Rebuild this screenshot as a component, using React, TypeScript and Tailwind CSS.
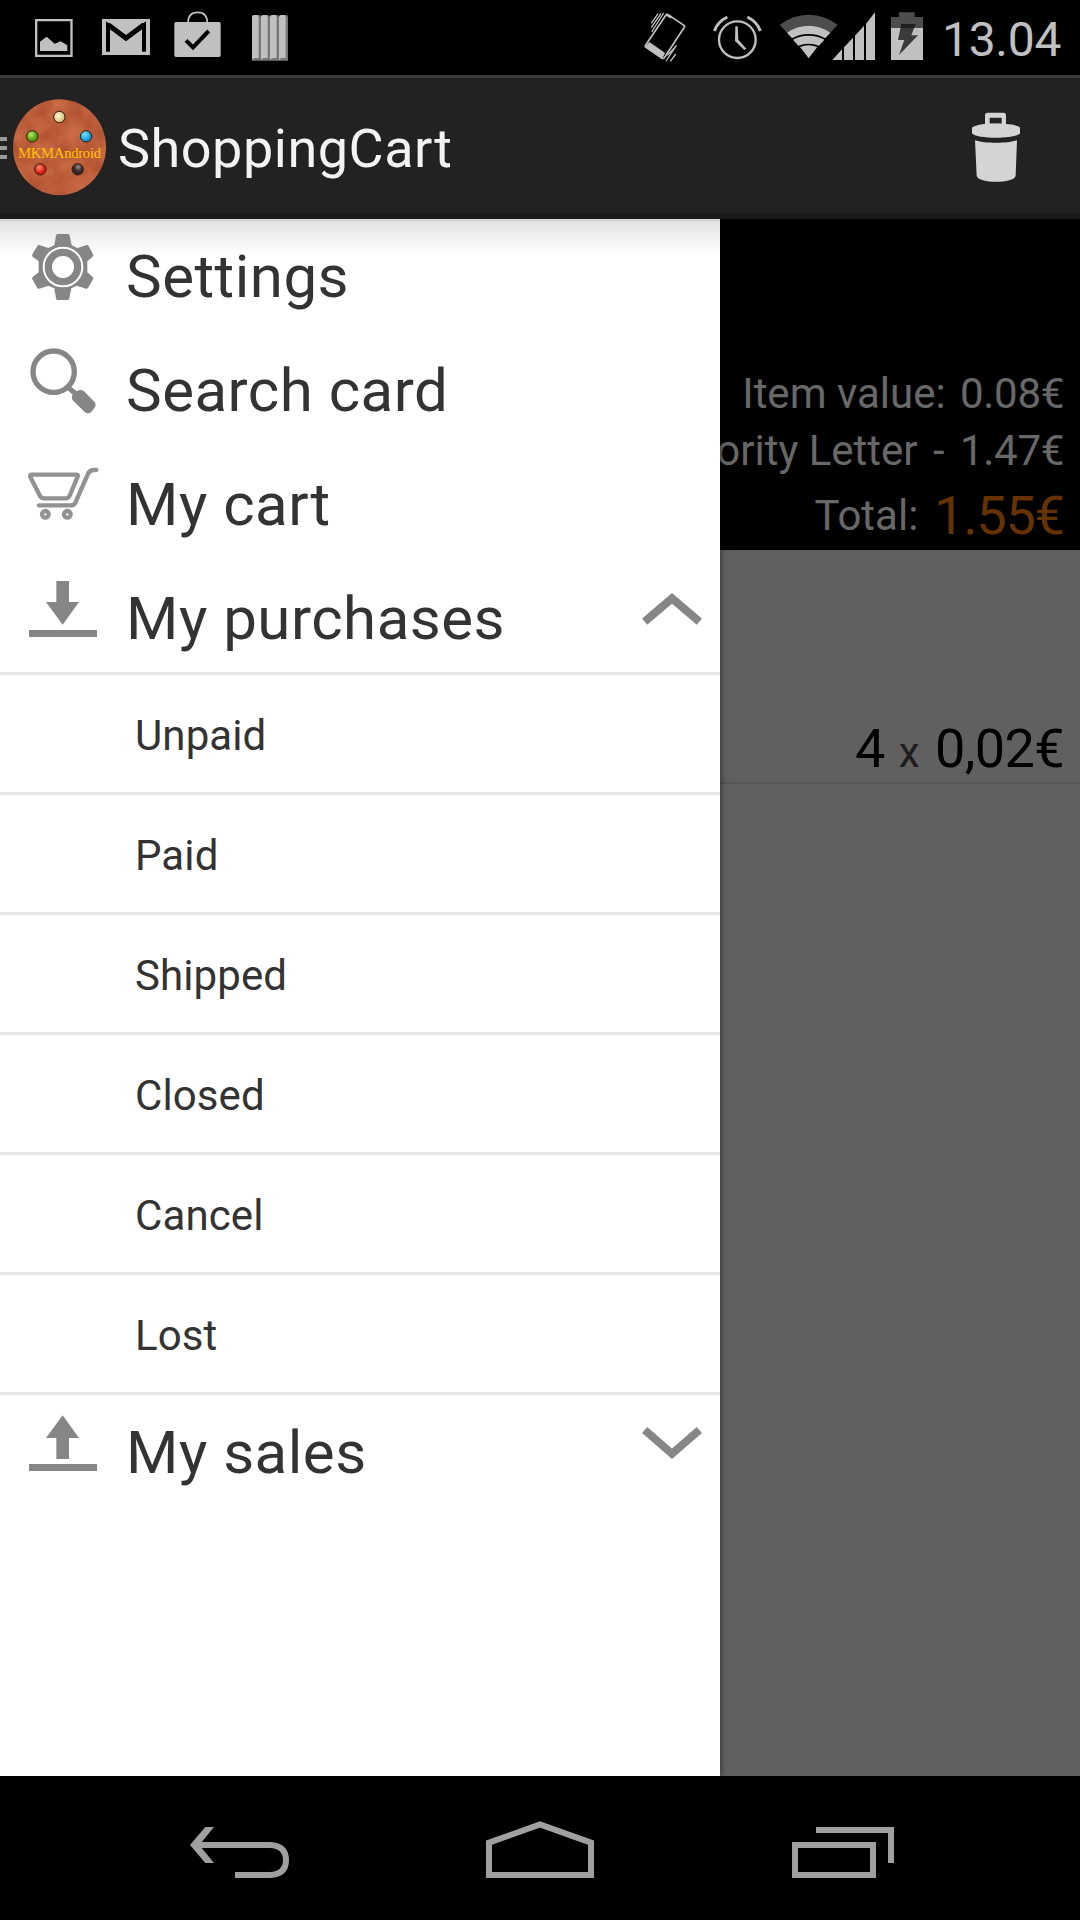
import React from "react";

const gray = "#868686";

function StatusBar() {
  return (
    <div className="flex h-[75px] items-start bg-black">
      <svg className="ml-[33px] mt-3 h-[51px] w-[42px]" viewBox="99 36 126 153" fill="#c0c0c0">
        <path fillRule="evenodd" d="M105 57h113v114H105zM112 64v100h99V64z" />
        <path d="M120 153v-28l20-15 24 21 18-7 20 12v17z" />
      </svg>
      <svg className="ml-[25px] mt-3 h-[51px] w-[54px]" viewBox="300 36 162 153">
        <path d="M306 57h144v108H306z" fill="#c0c0c0" />
        <path d="M324 155V76l54 40 54-40v79" fill="none" stroke="#000" strokeWidth="12" />
        <path d="M318 69h12l48 36 48-36h11v12h-12v2l-47 35-47-35v-2h-13z" fill="#000" />
      </svg>
      <svg className="ml-[17px] mt-[9px] h-[54px] w-[51px]" viewBox="513 27 153 162">
        <rect x="523" y="66" width="139" height="105" rx="5" fill="#c0c0c0" />
        <path d="M564 69c0-20 10-32 29-32s29 12 29 32" fill="none" stroke="#c0c0c0" strokeWidth="5" />
        <path d="M558 121l21 21 47-49" fill="none" stroke="#000" strokeWidth="12" />
      </svg>
      <svg className="ml-[28px] mt-3 h-[54px] w-[42px]" viewBox="750 36 126 162">
        {[756, 783, 810, 837].map((x) => (
          <g key={x}>
            <path d={`M${x} 52q0-7 7-7h13q7 0 7 7v130h-27z`} fill="#777" />
            <path d={`M${x} 52q0-7 7-7h9q4 0 4 7v122h-14l-6 6z`} fill="#c0c0c0" />
          </g>
        ))}
      </svg>
      <svg className="ml-[350px] mt-[9px] h-[57px] w-[45px]" viewBox="66 27 135 171" fill="none" stroke="#c0c0c0">
        <path d="M144 44L193 77Q195 79 193 82L133 173Q130 177 125 174L78 142Q74 139 77 135L138 45Q140 42 144 44Z" strokeWidth="5" />
        <path d="M88 127l46 32-8 17-49-36z" fill="#c0c0c0" strokeWidth="2" />
        <path d="M140 44l14 8" strokeWidth="8" />
        <path d="M94 70l20-29M94 83l29-43M95 96l36-57M138 183l31-46M151 184l16-22M142 166l28-30" strokeWidth="4" />
      </svg>
      <svg className="ml-[25px] mt-[9px] h-[57px] w-[51px]" viewBox="276 27 153 171" fill="none" stroke="#c0c0c0">
        <circle cx="352" cy="119" r="55" strokeWidth="7" />
        <path d="M283 93q9-27 39-42M421 93q-9-27-39-42" strokeWidth="9" />
        <path d="M346 79h7l2 40 24 27-6 4-28-27z" fill="#c0c0c0" stroke="none" />
      </svg>
      <svg className="ml-[15px] mt-[9px] h-[57px] w-[102px]" viewBox="474 27 306 171" fill="#c0c0c0">
        <path d="M479 74q40-30 87-30t87 30l-22 24q-27-21-65-21t-65 21z" fill="#4d4d4d" />
        <path d="M501 98q28-21 65-21t65 21l-15 17q-22-13-50-13t-50 13z" />
        <path d="M519 119q20-12 47-12t47 12l-16 18q-14-6-31-6t-31 6z" />
        <path d="M540 141q25-10 52 0l-26 34z" />
        <path d="M637 180l29-32v32zM672 180v-38l27-29v67zM705 180v-73l27-30v103zM738 180V71l27-34v143z" />
      </svg>
      <svg className="ml-[8px] mt-[9px] h-[57px] w-[39px]" viewBox="804 27 117 171">
        <path d="M813 84V51h24V37h47v14h25v33z" fill="#4d4d4d" />
        <path d="M813 84h96v96h-96z" fill="#c0c0c0" />
        <path d="M844 72h43l-13 34h20l-57 59 16-45h-19z" fill="#3a3a3a" />
        <path d="M844 72h43l-5 12h-41z" fill="#202020" />
      </svg>
      <span className="ml-[15px] text-[48px] leading-[79px] tracking-[-0.3px] text-[#c0c0c0]">13.04</span>
    </div>
  );
}

function Logo() {
  return (
    <svg className="ml-[6px] h-[97px] w-[93px]" viewBox="39 68 279 291">
      <defs>
        <filter id="clay" x="0" y="0" width="100%" height="100%" colorInterpolationFilters="sRGB">
          <feTurbulence type="fractalNoise" baseFrequency="0.02" numOctaves="3" seed="4" />
          <feColorMatrix values="0.16 0 0 0 0.66  0.16 0 0 0 0.29  0.12 0 0 0 0.17  0 0 0 0 1" />
          <feComposite in2="SourceGraphic" operator="in" />
        </filter>
        <radialGradient id="cream" cx=".4" cy=".4"><stop stopColor="#fffbd8" /><stop offset="1" stopColor="#d9c77e" /></radialGradient>
        <radialGradient id="green" cx=".4" cy=".35"><stop stopColor="#b5f060" /><stop offset="1" stopColor="#4d9a10" /></radialGradient>
        <radialGradient id="blue" cx=".4" cy=".35"><stop stopColor="#7fe2ff" /><stop offset="1" stopColor="#0b9be0" /></radialGradient>
        <radialGradient id="red" cx=".4" cy=".35"><stop stopColor="#ff8a70" /><stop offset="1" stopColor="#d81510" /></radialGradient>
        <radialGradient id="dark" cx=".55" cy=".3"><stop stopColor="#b09090" /><stop offset=".6" stopColor="#423838" /><stop offset="1" stopColor="#302525" /></radialGradient>
      </defs>
      <ellipse cx="178.500" cy="212.500" rx="139.500" ry="144" fill="#b9573a" filter="url(#clay)" />
      <g stroke="#35180e" strokeWidth="3">
        <circle cx="178" cy="122" r="17" fill="url(#cream)" />
        <circle cx="97" cy="180" r="17" fill="url(#green)" />
        <circle cx="258" cy="180" r="17" fill="url(#blue)" />
        <circle cx="121" cy="279" r="17" fill="url(#red)" />
        <circle cx="233" cy="279" r="17" fill="url(#dark)" />
      </g>
      <text x="54" y="244" textLength="249" lengthAdjust="spacing" fill="#fdc500" fontSize="44" fontFamily="Liberation Serif, serif">MKMAndroid</text>
    </svg>
  );
}

function ActionBar() {
  return (
    <header className="flex h-[144px] items-center border-t-[3px] border-b-[6px] border-t-[#3a3a3a] border-b-[#1a1a1a] bg-[#222] pt-[3px]">
      <div className="flex w-[7px] flex-col gap-[5px] pt-0.5">
        <i className="h-1 bg-[#9a9a9a]" />
        <i className="h-1 bg-[#9a9a9a]" />
        <i className="h-1 bg-[#9a9a9a]" />
      </div>
      <Logo />
      <h1 className="ml-3 flex-1 pt-1 text-[54px] leading-none tracking-[0.5px] text-[#f3f3f3]">ShoppingCart</h1>
      <svg className="mr-[57px] h-[72px] w-[54px]" viewBox="207 104 162 216" fill="#d4d4d4">
        <path fillRule="evenodd" d="M255 147v-30q0-8 8-8h47q8 0 8 8v30zM269 124v18h36v-18z" />
        <path d="M216 154c12-17 132-17 144 0v17c-12 18-132 18-144 0z" />
        <path d="M225 192c28 10 98 10 126 0l-4 106c-4 24-113 24-117 0z" />
      </svg>
    </header>
  );
}

function GearIcon() {
  return (
    <svg className="h-[72px] w-[72px]" viewBox="81 48 216 216" fill={gray}>
      <path d="M173 57h32q3 0 4 5l6 29 17 8 28-9q4-1 6 3l13 25q2 4-1 7l-16 14v33l16 14q3 3 1 7l-15 26q-2 3-6 2l-27-9-17 8-6 30q-1 5-4 5h-32q-3 0-4-5l-5-30-18-8-27 9q-4 1-6-2l-15-26q-2-4 1-7l18-14v-33l-18-14q-3-3-1-7l15-25q2-4 6-3l27 9 18-8 5-29q1-5 4-5z" />
      <circle cx="189" cy="156" r="58" fill="none" stroke="#fff" strokeWidth="6" />
      <circle cx="189" cy="156" r="33" fill="#fff" />
    </svg>
  );
}

function SearchIcon() {
  return (
    <svg className="h-[72px] w-[72px]" viewBox="81 390 216 216" fill={gray}>
      <circle cx="161" cy="470" r="62" fill="none" stroke={gray} strokeWidth="16" />
      <path d="M198 521l10-10 22 18q12-8 22 0l32 32q6 9-1 18l-9 12q-9 8-19 1l-34-33q-9-9-3-20z" />
    </svg>
  );
}

function CartIcon() {
  return (
    <svg className="h-[72px] w-[72px]" viewBox="81 57 216 216" fill="none" stroke="#929292" strokeWidth="13" strokeLinejoin="round" strokeLinecap="round">
      <path d="M96 104H228Q236 104 233 110L210 165Q206 175 196 175H132Q124 175 119 166L91 111Q88 104 96 104Z" />
      <path d="M117 196H212Q222 196 226 188L263 104Q268 91 279 90H289" />
      <circle cx="136" cy="223" r="10" strokeWidth="13" />
      <circle cx="202" cy="223" r="10" strokeWidth="13" />
    </svg>
  );
}

function DownIcon() {
  return (
    <svg className="h-[72px] w-[72px]" viewBox="81 399 216 216" fill={gray}>
      <path d="M169 423h38v63h30l-49 68-50-68h31zM87 570h204v21H87z" />
    </svg>
  );
}

function UpIcon() {
  return (
    <svg className="h-[72px] w-[72px]" viewBox="81 81 216 216" fill={gray}>
      <path d="M169 237v-63h-31l50-68 49 68h-30v63zM87 252h204v21H87z" />
    </svg>
  );
}

function Chevron({ up = false }: { up?: boolean }) {
  return (
    <svg className="mr-[15px] mt-[27px] h-[42px] w-[66px]" viewBox="57 54 198 126" fill="none" stroke={gray} strokeWidth="24">
      <path d={up ? "M74 155L156 85L238 155" : "M74 78L156 149L238 78"} />
    </svg>
  );
}

type GroupProps = {
  icon: React.ReactNode;
  label: string;
  chevron?: React.ReactNode;
};

function Group({ icon, label, chevron }: GroupProps) {
  return (
    <div className="flex h-[111px] items-start pl-[27px]">
      <div className="mt-3">{icon}</div>
      <span className="ml-[27px] flex-1 text-[60px] leading-[116px] tracking-[0.5px] text-[#333]">{label}</span>
      {chevron}
    </div>
  );
}

const children = ["Unpaid", "Paid", "Shipped", "Closed", "Cancel", "Lost"];

function Drawer() {
  return (
    <nav className="relative z-10 w-[720px] shrink-0 bg-white shadow-[0_0_7px_rgba(0,0,0,0.6)]">
      <div className="absolute inset-x-0 top-0 h-[36px] bg-linear-to-b from-black/12 to-transparent">
        <div className="h-[3px] bg-black/5" />
      </div>
      <div className="relative flex flex-col gap-[3px]">
        <Group icon={<GearIcon />} label="Settings" />
        <Group icon={<SearchIcon />} label="Search card" />
        <Group icon={<CartIcon />} label="My cart" />
        <Group icon={<DownIcon />} label="My purchases" chevron={<Chevron up />} />
      </div>
      <ul className="border-t-[3px] border-[#e5e5e5]">
        {children.map((label) => (
          <li key={label} className="h-[120px] border-b-[3px] border-[#e5e5e5] pl-[135px] text-[42px] leading-[121px] tracking-[0.1px] text-[#333]">
            {label}
          </li>
        ))}
      </ul>
      <Group icon={<UpIcon />} label="My sales" chevron={<Chevron />} />
    </nav>
  );
}

function CartPanel() {
  return (
    <main className="flex min-w-0 flex-1 flex-col bg-[#606060] text-[42px] whitespace-nowrap">
      <section className="flex h-[331px] flex-col items-end justify-end bg-black pr-4 text-[#686868]">
        <p className="h-[57px] leading-[59px]">
          Item value: <span className="ml-[4px] tracking-[-0.3px]">0.08€</span>
        </p>
        <p className="h-[57px] leading-[59px]">
          Priority Letter <span className="mx-[5px]">-</span> <span className="tracking-[-0.3px]">1.47€</span>
        </p>
        <p className="flex h-[72px] items-start">
          <span className="leading-[75px]">Total:</span>
          <span className="ml-[16px] text-[54px] leading-[76px] tracking-[-1.2px] text-[#663300]">1.55€</span>
        </p>
      </section>
      <section className="flex h-[234px] items-end justify-end border-b-2 border-[#555] pr-4 text-[54px] leading-[66px] text-black">
        <p>
          4 <span className="mr-[2px] text-[42px] leading-none text-[#1d1d1d]">x</span>{" "}
          <span className="tracking-[-0.6px]">0,02€</span>
        </p>
      </section>
    </main>
  );
}

function NavBar() {
  return (
    <footer className="flex h-[144px] items-center justify-center gap-[180px] bg-black pt-1">
      <svg className="h-[60px] w-[120px]" viewBox="60 150 360 180" fill="none" stroke="#a0a0a0" strokeWidth="18">
        <path d="M110 225H330Q378 227 378 270Q378 313 330 315H225" />
        <path d="M90 225l46-54h26l-44 54 44 54h-26z" fill="#a0a0a0" stroke="none" />
      </svg>
      <svg className="h-[60px] w-[120px]" viewBox="960 150 360 180" fill="none" stroke="#a0a0a0" strokeWidth="18">
        <path d="M987 315V218L1140 163L1293 218V315Z" />
      </svg>
      <svg className="h-[60px] w-[120px]" viewBox="480 150 360 180" fill="none" stroke="#a0a0a0" strokeWidth="18">
        <path d="M525 225H759V315H525ZM588 180H813V279" />
      </svg>
    </footer>
  );
}

export default function App() {
  return (
    <div className="flex h-[1920px] w-[1080px] flex-col overflow-hidden bg-black font-[Roboto,sans-serif]">
      <StatusBar />
      <ActionBar />
      <div className="flex h-[1557px] overflow-hidden">
        <Drawer />
        <CartPanel />
      </div>
      <NavBar />
    </div>
  );
}
